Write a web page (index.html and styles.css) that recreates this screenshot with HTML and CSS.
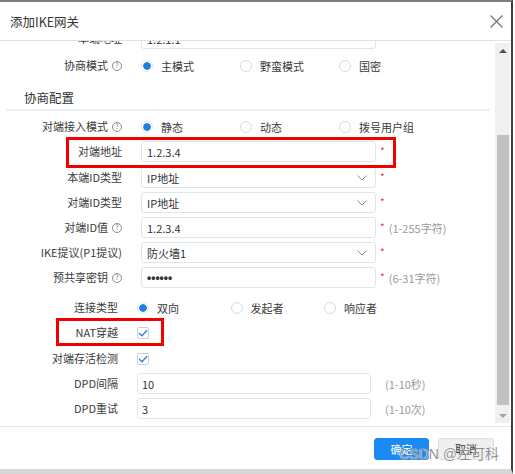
FILE: index.html
```html
<!DOCTYPE html>
<html lang="zh">
<head>
<meta charset="utf-8">
<title>添加IKE网关</title>
<link rel="stylesheet" href="styles.css">
</head>
<body>
<div class="dialog">
  <div class="header">
    <span class="title">添加IKE网关</span>
    <svg class="close" width="13" height="13" viewBox="0 0 13 13"><path d="M0.5 0.5L12.5 12.5M12.5 0.5L0.5 12.5" stroke="#6f6f6f" stroke-width="1.1" fill="none"/></svg>
  </div>
  <div class="body">
    <div class="scroll">
      <div class="content">
        <div class="row">
          <div class="label">本端地址</div>
          <div class="ctrl input">1.2.1.1</div>
        </div>
        <div class="row x2">
          <div class="label">协商模式<span class="help">?</span></div>
          <div class="ctrl radios">
            <span class="radio on"><i class="dot"></i>主模式</span>
            <span class="radio"><i class="dot"></i>野蛮模式</span>
            <span class="radio"><i class="dot"></i>国密</span>
          </div>
        </div>
        <div class="heading">协商配置</div>
        <div class="row x1">
          <div class="label">对端接入模式<span class="help">?</span></div>
          <div class="ctrl radios">
            <span class="radio on"><i class="dot"></i>静态</span>
            <span class="radio"><i class="dot"></i>动态</span>
            <span class="radio"><i class="dot"></i>拨号用户组</span>
          </div>
        </div>
        <div class="row">
          <div class="label">对端地址</div>
          <div class="ctrl input">1.2.3.4</div>
          <span class="star">*</span>
        </div>
        <div class="row x1">
          <div class="label">本端ID类型</div>
          <div class="ctrl input select">IP地址<svg class="chev" width="10" height="6" viewBox="0 0 10 6"><path d="M0.5 0.5L5 5L9.5 0.5" stroke="#8a8a8a" stroke-width="1" fill="none"/></svg></div>
          <span class="star">*</span>
        </div>
        <div class="row">
          <div class="label">对端ID类型</div>
          <div class="ctrl input select">IP地址<svg class="chev" width="10" height="6" viewBox="0 0 10 6"><path d="M0.5 0.5L5 5L9.5 0.5" stroke="#8a8a8a" stroke-width="1" fill="none"/></svg></div>
          <span class="star">*</span>
        </div>
        <div class="row">
          <div class="label">对端ID值<span class="help">?</span></div>
          <div class="ctrl input">1.2.3.4</div>
          <span class="star">*</span><span class="hint">(1-255字符)</span>
        </div>
        <div class="row">
          <div class="label">IKE提议(P1提议)</div>
          <div class="ctrl input select">防火墙1<svg class="chev" width="10" height="6" viewBox="0 0 10 6"><path d="M0.5 0.5L5 5L9.5 0.5" stroke="#8a8a8a" stroke-width="1" fill="none"/></svg></div>
          <span class="star">*</span>
        </div>
        <div class="row">
          <div class="label">预共享密钥<span class="help">?</span></div>
          <div class="ctrl input pwd">••••••</div>
          <span class="star">*</span><span class="hint">(6-31字符)</span>
        </div>
        <div class="row lower x5">
          <div class="label">连接类型</div>
          <div class="ctrl radios narrow">
            <span class="radio on"><i class="dot"></i>双向</span>
            <span class="radio"><i class="dot"></i>发起者</span>
            <span class="radio"><i class="dot"></i>响应者</span>
          </div>
        </div>
        <div class="row lower">
          <div class="label">NAT穿越</div>
          <div class="ctrl"><span class="check"><svg width="10" height="8" viewBox="0 0 10 8"><path d="M1 4L4 6.8L9 1.2" stroke="#2a86e0" stroke-width="1.4" fill="none"/></svg></span></div>
        </div>
        <div class="row lower x1">
          <div class="label">对端存活检测</div>
          <div class="ctrl"><span class="check"><svg width="10" height="8" viewBox="0 0 10 8"><path d="M1 4L4 6.8L9 1.2" stroke="#2a86e0" stroke-width="1.4" fill="none"/></svg></span></div>
        </div>
        <div class="row lower">
          <div class="label">DPD间隔</div>
          <div class="ctrl input">10</div>
          <span class="hint wide">(1-10秒)</span>
        </div>
        <div class="row lower">
          <div class="label">DPD重试</div>
          <div class="ctrl input">3</div>
          <span class="hint wide">(1-10次)</span>
        </div>
        <div class="mark mark-addr"></div>
        <div class="mark mark-nat"></div>
      </div>
    </div>
    <div class="scrollbar">
      <div class="arrow"><i class="tri up"></i></div>
      <div class="thumb"></div>
      <div class="arrow bottom"><i class="tri down"></i></div>
    </div>
  </div>
  <div class="footer">
    <button class="btn primary">确定</button>
    <button class="btn">取消</button>
  </div>
  <div class="watermark">CSDN @左可科</div>
</div>
</body>
</html>
```
FILE: styles.css
```css
* { box-sizing: border-box; }
html, body { margin: 0; padding: 0; background: #fff; }
body {
  width: 515px;
  height: 474px;
  overflow: hidden;
  font-family: "Noto Sans CJK SC", "Microsoft YaHei", sans-serif;
  font-size: 11px;
  color: #3a3a3a;
}
.dialog {
  position: relative;
  width: 513px;
  height: 474px;
  border-top: 2px solid #7d7d7d;
  border-right: 2px solid #3c3c3c;
  border-bottom: 5px solid #d6d6d6;
  display: flex;
  flex-direction: column;
  background: #fff;
}
.header {
  height: 39px;
  flex: none;
  display: flex;
  align-items: center;
  justify-content: space-between;
  padding: 2px 8px 0 10px;
  border-bottom: 1px solid #dbe4ee;
}
.title { font-size: 12.5px; color: #333; line-height: 16px; }
.close { display: block; margin-top: -2px; }

.body {
  height: 385px;
  flex: none;
  display: flex;
}
.scroll {
  flex: 1;
  overflow: hidden;
  position: relative;
}
.content {
  position: relative;
  margin-top: -13px;
  display: flex;
  flex-direction: column;
  gap: 4px;
}
.row {
  display: flex;
  align-items: center;
  height: 21px;
  flex: none;
}
.x1 { margin-top: 1px; }
.x2 { margin-top: 2px; }
.x5 { margin-top: 5px; }
.label {
  width: 122px;
  flex: none;
  text-align: right;
  line-height: 21px;
  white-space: nowrap;
  display: flex;
  justify-content: flex-end;
  align-items: center;
}
.row.lower .label { width: 118px; }
.help {
  display: inline-flex;
  align-items: center;
  justify-content: center;
  width: 10px;
  height: 10px;
  border: 1px solid #8c8c8c;
  border-radius: 50%;
  font-size: 7px;
  line-height: 1;
  color: #777;
  margin-left: 4px;
}
.ctrl { margin-left: 19px; flex: none; }
.input {
  width: 235px;
  height: 21px;
  border: 1px solid #dfe5ec;
  border-radius: 3px;
  padding-left: 5px;
  display: flex;
  align-items: center;
  color: #333;
  position: relative;
}
.row.lower .input { width: 234px; padding-left: 4px; }
.select .chev { position: absolute; right: 8px; top: 7px; }
.pwd {
  font-family: "Liberation Sans", sans-serif;
  font-size: 12px;
  font-weight: bold;
  letter-spacing: 0;
}
.star {
  color: #f0323c;
  margin-left: 4px;
  font-size: 10px;
  line-height: 10px;
  align-self: flex-start;
  margin-top: 5px;
}
.hint { color: #9a9a9a; margin-left: 4px; }
.hint.wide { margin-left: 14px; }

.radios { display: flex; align-items: center; }
.radio {
  display: inline-flex;
  align-items: center;
  width: 99px;
  flex: none;
}
.radios.narrow .radio { width: 93.5px; }
.dot {
  width: 12px;
  height: 12px;
  border: 1px solid #d5dbe2;
  border-radius: 50%;
  margin-right: 8px;
  background: #fff;
  flex: none;
}
.radio.on .dot {
  border-color: #e3e8ee;
  background: radial-gradient(circle, #1f7fe0 0, #1f7fe0 3.4px, #fff 4.2px);
}
.check {
  display: flex;
  align-items: center;
  justify-content: center;
  width: 12px;
  height: 12px;
  border: 1px solid #c6d1dd;
  border-radius: 2px;
}

.heading {
  height: 24px;
  flex: none;
  margin: 7px 5px 0 6px;
  padding-left: 18px;
  font-size: 12.5px;
  line-height: 22px;
  color: #333;
  border-bottom: 2px solid #eceff3;
}

.mark {
  position: absolute;
  border: 3px solid #f20000;
}
.mark-addr { top: 109px; left: 66px; width: 330px; height: 31px; }
.mark-nat { top: 290px; left: 56px; width: 108px; height: 28px; }

.scrollbar {
  width: 15px;
  flex: none;
  margin: 2px 1px 3px 0;
  background: #f0f0f0;
  display: flex;
  flex-direction: column;
  align-items: center;
}
.arrow {
  height: 15px;
  width: 15px;
  display: flex;
  align-items: center;
  justify-content: center;
}
.arrow.bottom { margin-top: auto; }
.tri { width: 0; height: 0; border-left: 4px solid transparent; border-right: 4px solid transparent; }
.tri.up { border-bottom: 4px solid #505050; }
.tri.down { border-top: 4px solid #a3a3a3; }
.thumb {
  width: 12px;
  height: 270px;
  margin-top: 77px;
  background: #c1c1c1;
}

.footer {
  height: 43px;
  flex: none;
  border-top: 1px solid #e3e8ee;
  display: flex;
  justify-content: flex-end;
  align-items: flex-start;
  gap: 9px;
  padding: 11px 17px 0 0;
}
.btn {
  height: 22px;
  width: 56px;
  border-radius: 3px;
  border: 1px solid #dedede;
  background: #efefef;
  color: #333;
  font-family: "Noto Sans CJK SC", "Microsoft YaHei", sans-serif;
  font-size: 11px;
  padding: 0;
}
.btn.primary {
  width: 55px;
  background: #1a8af2;
  border-color: #1a8af2;
  color: #fff;
}
.watermark {
  position: absolute;
  right: 12px;
  top: 443px;
  font-family: "Liberation Sans", "Noto Sans CJK SC", sans-serif;
  font-size: 14px;
  line-height: 18px;
  color: rgba(110, 110, 110, 0.78);
  text-shadow: 0 0 1px #fff, 0 0 1px #fff;
  white-space: nowrap;
}
```
